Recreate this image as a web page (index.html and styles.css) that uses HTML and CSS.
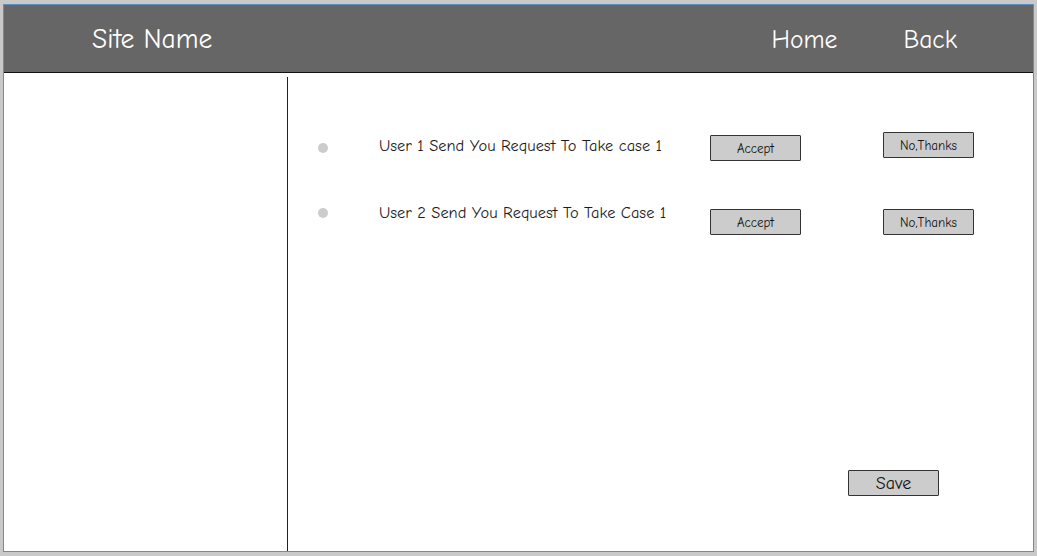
FILE: index.html
```html
<!DOCTYPE html>
<html>
<head>
<meta charset="utf-8">
<link rel="stylesheet" href="styles.css">
</head>
<body>
<div class="window">
  <header class="topbar">
    <div class="site-name">Site Name</div>
    <nav class="nav">
      <span class="nav-home">Home</span>
      <span class="nav-back">Back</span>
    </nav>
  </header>
  <div class="body">
    <aside class="sidebar"></aside>
    <main class="main">
      <div class="requests">
        <div class="req req-1">
          <span class="dot"></span>
          <span class="req-text">User 1 Send You Request To Take case 1</span>
          <button class="btn btn-accept">Accept</button>
          <button class="btn btn-no">No,Thanks</button>
        </div>
        <div class="req req-2">
          <span class="dot"></span>
          <span class="req-text">User 2 Send You Request To Take Case 1</span>
          <button class="btn btn-accept">Accept</button>
          <button class="btn btn-no">No,Thanks</button>
        </div>
      </div>
      <div class="save-row">
        <button class="btn btn-save">Save</button>
      </div>
    </main>
  </div>
</div>
</body>
</html>
```

FILE: styles.css
```css
* { box-sizing: border-box; }
html, body { margin: 0; padding: 0; }
body {
  width: 1037px;
  height: 556px;
  background: #c9c9c9;
  padding: 4px 4px 0 3px;
  font-family: "Comic Sans MS", "Comic Neue", "Lato", "DejaVu Sans", sans-serif;
  overflow: hidden;
}
.window {
  width: 1031px;
  height: 548px;
  border: 1px solid #5e8fc0;
  background: #fff;
  display: flex;
  flex-direction: column;
}
.topbar {
  height: 68px;
  flex: none;
  background: #666666;
  border-bottom: 1px solid #111;
  display: flex;
  align-items: center;
  color: #fff;
  font-size: 25.5px;
  padding-top: 1px;
  font-weight: 500;
}
.site-name {
  margin-left: 88px;
  font-size: 27.5px;
}
.nav {
  margin-left: auto;
  display: flex;
  gap: 66px;
  margin-right: 76px;
}
.body {
  flex: 1;
  display: grid;
  grid-template-columns: 284px 1fr;
  padding-top: 4px;
}
.sidebar {
  border-right: 1px solid #222;
}
.main {
  display: flex;
  flex-direction: column;
  padding: 55px 0 0 30px;
}
.requests {
  display: flex;
  flex-direction: column;
  gap: 39px;
}
.req {
  display: grid;
  grid-template-columns: 61px 331px 173px 91px;
  align-items: start;
  height: 32px;
}
.dot {
  width: 10px;
  height: 10px;
  border-radius: 50%;
  background: #cccccc;
}
.req-text {
  font-size: 16.4px;
  line-height: 20px;
  color: #1a1a1a;
}
.btn {
  font-family: inherit;
  background: #cccccc;
  border: 1px solid #333;
  border-radius: 1px;
  color: #111;
  padding: 0;
  width: 91px;
  height: 26px;
  font-size: 13px;
}
.req-1 .dot { margin-top: 11px; }
.req-1 .req-text { margin-top: 4px; }
.req-1 .btn-accept { margin-top: 3px; }
.req-1 .btn-no { margin-top: 0; }
.req-2 .dot { margin-top: 5px; }
.req-2 .req-text { margin-top: 0; }
.req-2 .btn { margin-top: 6px; }
.save-row {
  margin-top: auto;
  margin-bottom: 55px;
  padding-left: 530px;
}
.btn-save {
  font-size: 18px;
  height: 26px;
}
```
